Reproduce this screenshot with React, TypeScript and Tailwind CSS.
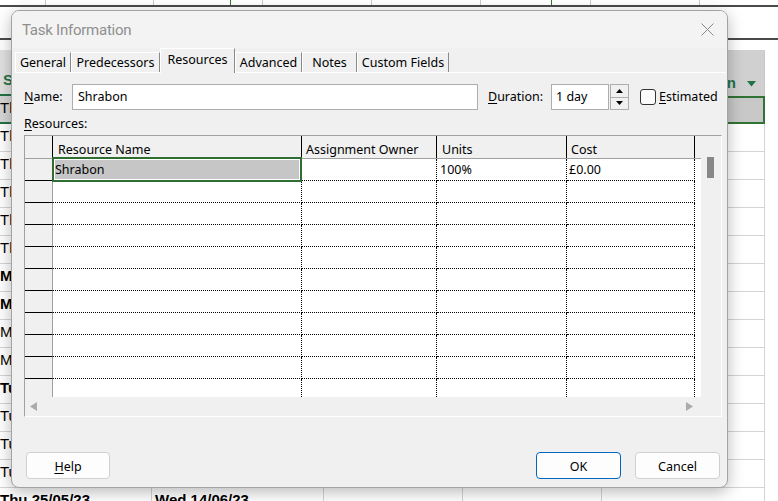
import React from "react";

type BgRowProps = { a: string; b: string; bold?: boolean; sel?: boolean };

function BgRow({ a, b, bold, sel }: BgRowProps) {
  const txt = bold ? "font-bold" : "font-normal";
  return (
    <div className={sel ? "flex h-[28px] shrink-0 bg-[#d6d6d6]" : "flex h-[28px] shrink-0 bg-white"}>
      <div className={sel ? "w-[152px] shrink-0 border-r border-[#d4d4d4] border-b-2 border-b-[#217346] overflow-hidden whitespace-nowrap" : "w-[152px] shrink-0 border-r border-b border-[#d4d4d4] overflow-hidden whitespace-nowrap"}>
        <span className={`block text-[15px] leading-[24px] text-black ${txt}`}>{a}</span>
      </div>
      <div className="w-[172px] shrink-0 border-r border-b border-[#d4d4d4] pl-[3px] overflow-hidden whitespace-nowrap">
        <span className={`block text-[15px] leading-[24px] text-black ${txt}`}>{b}</span>
      </div>
      <div className="w-[139px] shrink-0 border-r border-b border-[#d4d4d4]" />
      <div className="w-[139px] shrink-0 border-r border-b border-[#d4d4d4]" />
      <div className={sel ? "w-[163px] shrink-0 border-2 border-[#2f7335] bg-[#c8c8c8]" : "w-[163px] shrink-0 border-r border-b border-[#d4d4d4]"} />
      <div className="flex-1 bg-white" />
    </div>
  );
}

const bgRows: BgRowProps[] = [
  { a: "Thu 18/05/23", b: "Thu 18/05/23", sel: true },
  { a: "Thu 18/05/23", b: "Thu 18/05/23" },
  { a: "Thu 18/05/23", b: "Thu 18/05/23" },
  { a: "Thu 18/05/23", b: "Thu 18/05/23" },
  { a: "Thu 18/05/23", b: "Thu 18/05/23" },
  { a: "Thu 18/05/23", b: "Thu 18/05/23" },
  { a: "Mon 22/05/23", b: "Wed 24/05/23", bold: true },
  { a: "Mon 22/05/23", b: "Tue 23/05/23", bold: true },
  { a: "Mon 22/05/23", b: "Mon 22/05/23" },
  { a: "Mon 22/05/23", b: "Mon 22/05/23" },
  { a: "Tue 23/05/23", b: "Wed 24/05/23", bold: true },
  { a: "Tue 23/05/23", b: "Tue 23/05/23" },
  { a: "Tue 23/05/23", b: "Tue 23/05/23" },
  { a: "Tue 23/05/23", b: "Tue 23/05/23" },
  { a: "Thu 25/05/23", b: "Wed 14/06/23", bold: true },
];

function Background() {
  return (
    <div className="flex flex-col w-[778px] h-[501px] font-['Liberation_Sans',sans-serif]">
      <div className="flex h-[5px] shrink-0 bg-white">
        <div className="w-[46px] border-r border-[#c8c8c8]" />
        <div className="w-[108px] border-r border-[#c8c8c8]" />
        <div className="w-[77px] border-r border-[#2b7a33]" />
        <div className="w-[32px] border-r border-[#c8c8c8]" />
        <div className="w-[109px] border-r border-[#c8c8c8]" />
        <div className="w-[109px] border-r border-[#c8c8c8]" />
        <div className="w-[71px] border-r border-[#2b7a33]" />
        <div className="w-[39px] border-r border-[#c8c8c8]" />
        <div className="w-[109px] border-r border-[#c8c8c8]" />
        <div className="flex-1" />
      </div>
      <div className="h-[2px] shrink-0 bg-[#4a4a4a]" />
      <div className="h-[31px] shrink-0 bg-white" />
      <div className="h-[2px] shrink-0 bg-[#4a4a4a]" />
      <div className="h-[10px] shrink-0 bg-white" />
      <div className="flex h-[46px] shrink-0">
        <div className="w-[152px] shrink-0 bg-[#e1e1e1] border-r border-[#c8c8c8] border-b-2 border-b-[#217346] flex items-end pb-[3px] pl-[3px]">
          <span className="text-[15px] font-bold text-[#217346]">Start</span>
        </div>
        <div className="w-[172px] shrink-0 bg-[#e1e1e1] border-r border-[#c8c8c8]" />
        <div className="w-[139px] shrink-0 bg-[#e1e1e1] border-r border-[#c8c8c8]" />
        <div className="w-[139px] shrink-0 bg-[#e1e1e1] border-r border-[#c8c8c8]" />
        <div className="w-[163px] shrink-0 bg-[#d0d0d0] border-r border-[#c8c8c8] flex items-end justify-end pb-[6px] pr-[8px] whitespace-nowrap">
          <span className="text-[15px] font-bold text-[#217346] leading-none">Add New Column</span>
          <svg width="9" height="6" viewBox="0 0 9 6" className="ml-[11px] mb-[3px]">
            <path d="M0 0 L9 0 L4.5 5.5 Z" fill="#217346" />
          </svg>
        </div>
        <div className="flex-1 bg-white" />
      </div>
      {bgRows.map((r, i) => (
        <BgRow key={i} {...r} />
      ))}
    </div>
  );
}

const tabs = [
  { label: "General", w: "w-[56px]" },
  { label: "Predecessors", w: "w-[89px]" },
  { label: "Resources", w: "w-[75px]", sel: true },
  { label: "Advanced", w: "w-[67px]" },
  { label: "Notes", w: "w-[55px]" },
  { label: "Custom Fields", w: "w-[92px]" },
];

function UpArrow() {
  return (
    <svg width="7" height="4" viewBox="0 0 7 4">
      <path d="M0 4 L7 4 L3.5 0 Z" fill="#000" />
    </svg>
  );
}
function DownArrow() {
  return (
    <svg width="7" height="4" viewBox="0 0 7 4">
      <path d="M0 0 L7 0 L3.5 4 Z" fill="#000" />
    </svg>
  );
}

function GridRow({ first }: { first?: boolean }) {
  return (
    <div className="flex h-[22px] shrink-0">
      <div className="w-[28px] shrink-0 bg-[#f0f0f0] border-b border-b-black border-r border-r-[#a0a0a0]" />
      <div className="relative w-[249px] shrink-0 border-b border-r border-dotted border-black">
        {first && (
          <div className="absolute left-[-1px] right-[-1px] top-[-2px] bottom-[-2px] border-2 border-[#2e6e33] bg-[#c6c6c6] shadow-[inset_0_0_0_1px_white] pl-[1px] leading-[21px] z-10">
            Shrabon
          </div>
        )}
      </div>
      <div className="w-[135px] shrink-0 border-b border-r border-dotted border-black" />
      <div className="w-[130px] shrink-0 border-b border-r border-dotted border-black pl-[3px] leading-[21px]">
        {first ? "100%" : ""}
      </div>
      <div className="w-[128px] shrink-0 border-b border-r border-dotted border-black pl-[2px] leading-[21px]">
        {first ? "£0.00" : ""}
      </div>
      <div className="flex-1 bg-white" />
    </div>
  );
}

function Dialog() {
  return (
    <div className="absolute left-[11px] top-[10px] w-[717px] h-[478px] rounded-[8px] border border-[#a3a3a3] bg-[#f0f0f0] shadow-[0_4px_16px_rgba(0,0,0,0.28)] flex flex-col overflow-hidden font-['Noto_Sans',sans-serif] text-[12.5px] text-black">
      <div className="h-[37px] shrink-0 flex items-center justify-between pl-[10px] pr-[13px] bg-[#f3f3f3]">
        <span className="font-['Roboto',sans-serif] text-[15px] tracking-[-0.25px] text-[#8f8f8f] leading-none pt-[2px]">Task Information</span>
        <svg width="13" height="13" viewBox="0 0 13 13">
          <path d="M0.5 0.5 L12.5 12.5 M12.5 0.5 L0.5 12.5" stroke="#8a8a8a" strokeWidth="1" />
        </svg>
      </div>
      <div className="h-[24px] shrink-0 flex items-end pl-[3px]">
        {tabs.map((t) =>
          t.sel ? (
            <div
              key={t.label}
              className={`${t.w} h-[25px] -mb-[1px] relative z-10 shrink-0 bg-[#f0f0f0] border-t border-l border-white border-r border-r-[#8a8a8a] flex justify-center pt-[2px] leading-[18px] whitespace-nowrap`}
            >
              {t.label}
            </div>
          ) : (
            <div
              key={t.label}
              className={`${t.w} h-[20px] shrink-0 bg-[#f0f0f0] border-t border-l border-white border-r border-r-[#8a8a8a] flex justify-center leading-[19px] whitespace-nowrap`}
            >
              {t.label}
            </div>
          )
        )}
      </div>
      <div className="ml-[3px] mr-[1px] h-[345px] shrink-0 border-t border-white pl-[9px] flex flex-col">
        <div className="mt-[11px] h-[26px] flex items-center">
          <div className="w-[48px] shrink-0">
            <u className="underline-offset-2">N</u>ame:
          </div>
          <div className="w-[406px] h-[26px] shrink-0 border border-[#adadad] bg-white pl-[5px] flex items-center">Shrabon</div>
          <div className="ml-[10px] w-[63px] shrink-0">
            <u className="underline-offset-2">D</u>uration:
          </div>
          <div className="w-[58px] h-[26px] shrink-0 border border-[#adadad] bg-white pl-[4px] flex items-center">1 day</div>
          <div className="ml-[1px] w-[19px] h-[26px] shrink-0 border border-[#adadad] bg-[#f0f0f0] flex flex-col">
            <div className="flex-1 flex items-center justify-center border-b border-[#adadad]">
              <UpArrow />
            </div>
            <div className="flex-1 flex items-center justify-center">
              <DownArrow />
            </div>
          </div>
          <div className="ml-[11px] w-[16px] h-[16px] shrink-0 rounded-[3px] border border-[#333] bg-[#fbfbfb]" />
          <div className="ml-[3px]">
            <u className="underline-offset-2">E</u>stimated
          </div>
        </div>
        <div className="mt-[6px] h-[15px] leading-[15px]">
          <u className="underline-offset-2">R</u>esources:
        </div>
        <div className="mt-[4px] w-[698px] h-[282px] shrink-0 border border-t-[#a0a0a0] border-l-[#a0a0a0] border-r-white border-b-white flex flex-col">
          <div className="flex h-[261px] shrink-0">
            <div className="w-[676px] shrink-0 flex flex-col overflow-hidden bg-white">
              <div className="flex h-[23px] shrink-0 bg-[#f0f0f0] border-b border-[#a0a0a0] leading-[16px] whitespace-nowrap">
                <div className="w-[28px] shrink-0 border-r border-black" />
                <div className="w-[249px] shrink-0 border-r border-black pl-[5px] pt-[6px]">Resource Name</div>
                <div className="w-[135px] shrink-0 border-r border-black pl-[4px] pt-[6px]">Assignment Owner</div>
                <div className="w-[130px] shrink-0 border-r border-black pl-[5px] pt-[6px]">Units</div>
                <div className="w-[128px] shrink-0 border-r border-black pl-[4px] pt-[6px]">Cost</div>
                <div className="flex-1" />
              </div>
              <GridRow first />
              {Array.from({ length: 10 }).map((_, i) => (
                <GridRow key={i} />
              ))}
            </div>
            <div className="flex-1 bg-[#f0f0f0]">
              <div className="ml-[6px] mt-[21px] w-[7px] h-[21px] bg-[#878787]" />
            </div>
          </div>
          <div className="flex-1 bg-[#f0f0f0] flex items-center justify-between pl-[5px] pr-[28px]">
            <svg width="7" height="9" viewBox="0 0 7 9">
              <path d="M7 0 L7 9 L0 4.5 Z" fill="#ababab" />
            </svg>
            <svg width="7" height="9" viewBox="0 0 7 9">
              <path d="M0 0 L0 9 L7 4.5 Z" fill="#ababab" />
            </svg>
          </div>
        </div>
      </div>
      <div className="mt-[35px] h-[27px] shrink-0 flex pl-[14px] pr-[7px]">
        <div className="w-[84px] h-[27px] rounded-[4px] border border-[#d0d0d0] bg-[#fdfdfd] flex items-center justify-center pt-[3px]">
          <span>
            <u className="underline-offset-2">H</u>elp
          </span>
        </div>
        <div className="flex-1" />
        <div className="w-[85px] h-[27px] rounded-[4px] border border-[#0067c0] bg-[#fdfdfd] flex items-center justify-center pt-[3px]">OK</div>
        <div className="ml-[14px] w-[85px] h-[27px] rounded-[4px] border border-[#d0d0d0] bg-[#fdfdfd] flex items-center justify-center pt-[3px]">Cancel</div>
      </div>
    </div>
  );
}

export default function App() {
  return (
    <div className="relative w-[778px] h-[501px] overflow-hidden bg-white">
      <Background />
      <Dialog />
    </div>
  );
}
